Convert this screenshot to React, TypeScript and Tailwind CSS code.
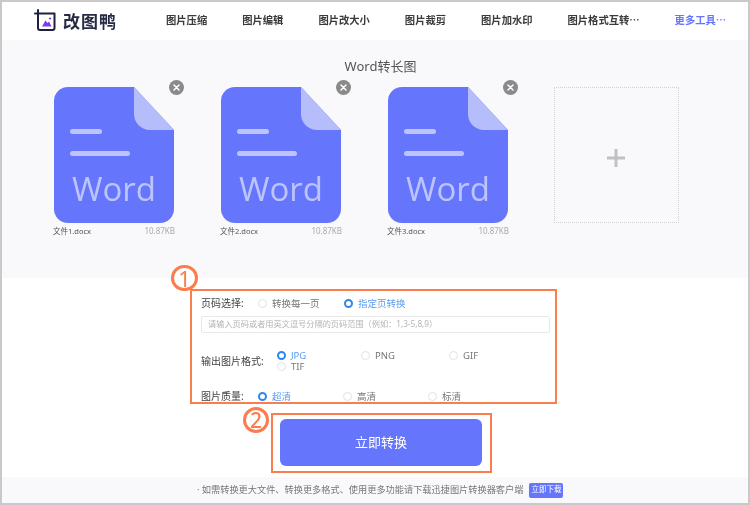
import React from "react";

const navItems = ["图片压缩", "图片编辑", "图片改大小", "图片裁剪", "图片加水印", "图片格式互转⋯"];

const files = [
  { name: "文件1.docx", size: "10.87KB" },
  { name: "文件2.docx", size: "10.87KB" },
  { name: "文件3.docx", size: "10.87KB" },
];

function Logo() {
  return (
    <svg width="24" height="24" viewBox="0 0 24 24" fill="none">
      <path d="M1 4.5H20.5V19a2 2 0 0 1-2 2H6a2 2 0 0 1-2-2V1" stroke="#1c2140" strokeWidth="2" strokeLinecap="round" strokeLinejoin="round" />
      <path d="M8 17.5L11.5 11.5L13.5 14L15 12.5L17.5 17.5Z" fill="#7c3aed" />
      <circle cx="16" cy="9.5" r="1.1" fill="#7c3aed" />
    </svg>
  );
}

function DocIcon() {
  return (
    <svg width="120" height="136" viewBox="0 0 120 136" className="block">
      <path d="M14 0H80L120 43V122a14 14 0 0 1-14 14H14a14 14 0 0 1-14-14V14A14 14 0 0 1 14 0Z" fill="#6576fd" />
      <path d="M80 0L120 43H96a16 16 0 0 1-16-16Z" fill="#b5bdfb" />
      <rect x="16" y="42" width="32" height="5" rx="2.5" fill="#bcc4fb" />
      <rect x="16" y="64" width="60" height="5" rx="2.5" fill="#bcc4fb" />
      <text x="18" y="114" fontSize="33" fill="#bcc4fb" fontWeight="400" fontFamily="'Open Sans','Noto Sans',sans-serif">
        Word
      </text>
    </svg>
  );
}

function CloseBadge() {
  return (
    <div className="absolute -top-[7px] -right-[10px] w-[15px] h-[15px] rounded-full bg-[#8a8a8a] flex items-center justify-center">
      <svg width="7" height="7" viewBox="0 0 7 7">
        <path d="M1 1L6 6M6 1L1 6" stroke="#fff" strokeWidth="1.5" strokeLinecap="round" />
      </svg>
    </div>
  );
}

function FileCard({ name, size }: { name: string; size: string }) {
  return (
    <div className="w-[120px] mr-[47px]">
      <div className="relative">
        <DocIcon />
        <CloseBadge />
      </div>
      <div className="flex justify-between items-center mt-[3px] -ml-[1px] -mr-[1px] text-[7.5px] leading-[10px]">
        <span className="text-[#555]">{name}</span>
        <span className="text-[#aaa] text-[8px]">{size}</span>
      </div>
    </div>
  );
}

function Radio({ label, checked, className }: { label: string; checked?: boolean; className?: string }) {
  return (
    <div className={`flex items-center gap-[5px] text-[9.5px] leading-[11px] ${checked ? "text-[#5a9cf0]" : "text-[#777]"} ${className ?? ""}`}>
      {checked ? (
        <span className="w-[9px] h-[9px] rounded-full border-[2.5px] border-[#2f86ee] bg-white shrink-0" />
      ) : (
        <span className="w-[9px] h-[9px] rounded-full border border-[#e2e2e2] bg-white shrink-0" />
      )}
      <span>{label}</span>
    </div>
  );
}

export default function App() {
  return (
    <div className="relative w-[750px] h-[505px] overflow-hidden border-2 border-[#c9c9c9] bg-white font-['Noto_Sans','Noto_Sans_CJK_SC',sans-serif] blur-[0.35px]">
      {/* Header */}
      <div className="h-[38px] flex items-center bg-white">
        <div className="ml-[32px] w-[132px] flex items-center gap-[5px]">
          <Logo />
          <span className="text-[#262a45] text-[17px] font-bold tracking-[1px] leading-none">改图鸭</span>
        </div>
        <div className="flex items-center text-[10.3px] font-bold text-[#3a3a3a]">
          {navItems.map((item, i) => (
            <span key={item} className={i === 0 ? "" : "ml-[35px]"}>
              {item}
            </span>
          ))}
          <span className="ml-[35px] text-[#6576fd]">更多工具⋯</span>
        </div>
      </div>

      {/* Upload area */}
      <div className="h-[238px] bg-[#f9f9fc]">
        <div className="pt-[17px] h-[47px] text-center text-[13px] leading-[18px] text-[#555] pl-[11px]">Word转长图</div>
        <div className="flex pl-[52px]">
          {files.map((f) => (
            <FileCard key={f.name} name={f.name} size={f.size} />
          ))}
          <div className="-ml-[1px] w-[125px] h-[136px] border border-dotted border-[#d2d2d2] flex items-center justify-center pt-[5px] pr-[2px]">
            <svg width="18" height="18" viewBox="0 0 18 18">
              <path d="M9 0V18M0 9H18" stroke="#c0c0c5" strokeWidth="3" />
            </svg>
          </div>
        </div>
      </div>

      {/* Options */}
      <div className="h-[199px] bg-white pl-[199px] pt-[18px] text-[10px] text-[#444]">
        <div className="flex items-center h-[14px]">
          <span className="w-[57px]">页码选择:</span>
          <Radio label="转换每一页" className="w-[86px]" />
          <Radio label="指定页转换" checked />
        </div>
        <div className="mt-[6px] w-[349px] h-[17px] border border-[#e8e8e8] rounded-[2px] pl-[6px] flex items-center text-[8.2px] text-[#b5b5b5]">
          请输入页码或者用英文逗号分隔的页码范围（例如：1,3-5,8,9）
        </div>
        <div className="flex items-center mt-[17px]">
          <span className="w-[76px]">输出图片格式:</span>
          <div className="grid grid-cols-[84px_88px_60px]">
            <Radio label="JPG" checked />
            <Radio label="PNG" />
            <Radio label="GIF" />
            <Radio label="TIF" />
          </div>
        </div>
        <div className="flex items-center mt-[17px] h-[14px]">
          <span className="w-[57px]">图片质量:</span>
          <Radio label="超清" checked className="w-[85px]" />
          <Radio label="高清" className="w-[85px]" />
          <Radio label="标清" />
        </div>
        <button className="block ml-[79px] mt-[16px] w-[202px] h-[47px] rounded-[6px] bg-[#6576fd] text-white text-[13px]">
          立即转换
        </button>
      </div>

      {/* Footer */}
      <div className="h-[26px] bg-[#f9f9fc] flex items-center pl-[195px] text-[9.2px] text-[#777]">
        <span>· 如需转换更大文件、转换更多格式、使用更多功能请下载迅捷图片转换器客户端</span>
        <span className="ml-[6px] w-[34px] h-[15px] rounded-[2px] bg-[#6576fd] text-white text-[7.5px] flex items-center justify-center">立即下载</span>
      </div>

      {/* Orange annotations */}
      <div className="absolute left-[188px] top-[287px] w-[367px] h-[115px] border-2 border-[#fb7d4e]" />
      <div className="absolute left-[269px] top-[411px] w-[221px] h-[60px] border-2 border-[#fb7d4e]" />
      <div className="absolute left-[169px] top-[263px] w-[27px] h-[26px] rounded-full border-[3px] border-[#fb7d4e] bg-white flex items-center justify-center text-[#fb7d4e] text-[22px] leading-none">
        1
      </div>
      <div className="absolute left-[241px] top-[405px] w-[26px] h-[26px] rounded-full border-[3px] border-[#fb7d4e] bg-white flex items-center justify-center text-[#fb7d4e] text-[21px] font-medium leading-none">
        2
      </div>
    </div>
  );
}
